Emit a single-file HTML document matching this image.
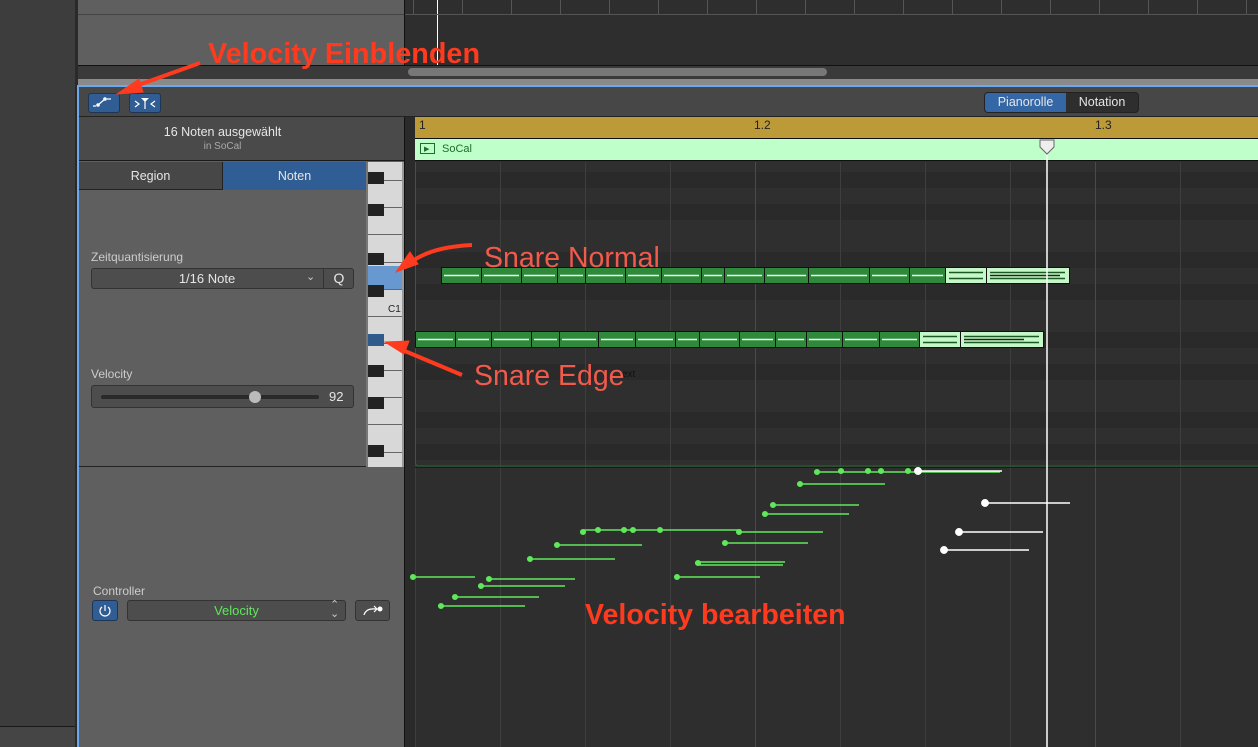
<!DOCTYPE html>
<html><head><meta charset="utf-8"><style>
*{margin:0;padding:0;box-sizing:border-box}
body{width:1258px;height:747px;overflow:hidden;background:#2e2e2e;font-family:"Liberation Sans",sans-serif;position:relative}
.a{position:absolute}
.t{color:#e6e6e6;font-size:12.5px}
</style></head><body>
<div class="a" style="left:0;top:0;width:77px;height:747px;background:#3d3d3d"></div>
<div class="a" style="left:0;top:726px;width:75px;height:1px;background:#1a1a1a"></div>
<div class="a" style="left:0;top:727px;width:75px;height:20px;background:#454545"></div>
<div class="a" style="left:75px;top:0;width:3px;height:747px;background:#2a2a2a"></div>
<div class="a" style="left:78px;top:0;width:326px;height:65px;background:#5f5f5f"></div>
<div class="a" style="left:78px;top:14px;width:326px;height:1px;background:#444"></div>
<div class="a" style="left:404px;top:0;width:1px;height:79px;background:#111"></div>
<div class="a" style="left:78px;top:65px;width:1180px;height:1px;background:#111"></div>
<div class="a" style="left:78px;top:66px;width:1180px;height:13px;background:#3a3a3a"></div>
<div class="a" style="left:408px;top:68px;width:419px;height:8px;border-radius:4px;background:#777"></div>
<div class="a" style="left:78px;top:79px;width:1180px;height:6px;background:#8a8a8a"></div>
<div class="a" style="left:78px;top:85px;width:1180px;height:2px;background:#6aa9f0"></div>
<div class="a" style="left:77px;top:85px;width:2px;height:662px;background:#6aa9f0"></div>
<!-- toolbar -->
<div class="a" style="left:79px;top:87px;width:1179px;height:30px;background:#474747;border-bottom:1px solid #222"></div>
<div class="a" style="left:88px;top:93px;width:32px;height:20px;background:#2f5d94;border-radius:3px;border:1px solid #1e3555"></div>
<svg class="a" style="left:88px;top:93px" width="32" height="20"><path d="M5 13h3M10 12l7-6M19 6h4" stroke="#fff" stroke-width="1.2"/><circle cx="10" cy="12" r="1.8" fill="#fff"/><circle cx="17" cy="6" r="1.8" fill="#fff"/></svg>
<div class="a" style="left:129px;top:93px;width:32px;height:20px;background:#2f5d94;border-radius:3px;border:1px solid #1e3555"></div>
<svg class="a" style="left:129px;top:93px" width="32" height="20"><path d="M6 8l4 3-4 3M26 8l-4 3 4 3M16 7v9" stroke="#fff" stroke-width="1.2" fill="none"/><path d="M12 5h8l-4 4z" fill="#fff"/></svg>
<div class="a" style="left:984px;top:92px;width:155px;height:21px;background:#2e2e2e;border:1px solid #222;border-radius:4px"></div>
<div class="a t" style="left:985px;top:93px;width:81px;height:19px;background:#3567a6;border-radius:3px 0 0 3px;text-align:center;line-height:19px">Pianorolle</div>
<div class="a t" style="left:1066px;top:93px;width:72px;height:19px;text-align:center;line-height:19px">Notation</div>
<!-- left panel -->
<div class="a" style="left:79px;top:117px;width:325px;height:630px;background:#5f5f5f"></div>
<div class="a" style="left:79px;top:117px;width:325px;height:44px;background:#4a4a4a;border-bottom:1px solid #1a1a1a"></div>
<div class="a t" style="left:79px;top:125px;width:287px;text-align:center">16 Noten ausgewählt</div>
<div class="a" style="left:79px;top:141px;width:287px;text-align:center;font-size:10px;color:#aaa">in SoCal</div>
<div class="a t" style="left:79px;top:162px;width:144px;height:28px;background:#474747;text-align:center;line-height:28px;border-right:1px solid #222;border-bottom:1px solid #222">Region</div>
<div class="a t" style="left:223px;top:162px;width:143px;height:28px;background:#2f5d94;text-align:center;line-height:28px">Noten</div>
<div class="a" style="left:91px;top:250px;font-size:12px;color:#ccc">Zeitquantisierung</div>
<div class="a" style="left:91px;top:268px;width:263px;height:21px;background:#4d4d4d;border:1px solid #333;border-radius:3px"></div>
<div class="a t" style="left:91px;top:271px;width:232px;text-align:center;font-size:13px">1/16 Note</div>
<div class="a" style="left:306px;top:270px;color:#ccc;font-size:11px">⌄</div>
<div class="a" style="left:323px;top:269px;width:1px;height:19px;background:#333"></div>
<div class="a t" style="left:324px;top:270px;width:30px;text-align:center;font-size:14px">Q</div>
<div class="a" style="left:91px;top:367px;font-size:12px;color:#ccc">Velocity</div>
<div class="a" style="left:91px;top:385px;width:263px;height:23px;background:#4d4d4d;border:1px solid #333;border-radius:3px"></div>
<div class="a" style="left:101px;top:395px;width:218px;height:4px;background:#2a2a2a;border-radius:2px"></div>
<div class="a" style="left:249px;top:391px;width:12px;height:12px;background:#bbb;border-radius:6px"></div>
<div class="a t" style="left:329px;top:389px;font-size:13px">92</div>
<div class="a" style="left:79px;top:466px;width:325px;height:1px;background:#222"></div>
<div class="a" style="left:93px;top:584px;font-size:12px;color:#ccc">Controller</div>
<div class="a" style="left:92px;top:600px;width:26px;height:21px;background:#2f5d94;border-radius:3px;border:1px solid #1e3555"></div>
<svg class="a" style="left:92px;top:600px" width="26" height="21"><path d="M10 7a5 5 0 1 0 6 0" stroke="#fff" stroke-width="1.2" fill="none"/><path d="M13 5v6" stroke="#fff" stroke-width="1.2"/></svg>
<div class="a" style="left:127px;top:600px;width:219px;height:21px;background:#4d4d4d;border:1px solid #333;border-radius:3px"></div>
<div class="a" style="left:127px;top:603px;width:219px;text-align:center;font-size:13px;color:#5ee85a">Velocity</div>
<div class="a" style="left:330px;top:601px;font-size:11px;color:#ccc;line-height:9px">⌃<br>⌄</div>
<div class="a" style="left:355px;top:600px;width:35px;height:21px;background:#4d4d4d;border:1px solid #333;border-radius:3px"></div>
<svg class="a" style="left:355px;top:600px" width="35" height="21"><path d="M9 15q2-7 12-6" stroke="#fff" stroke-width="1.2" fill="none"/><path d="M19 6l3 3-3 3" stroke="#fff" stroke-width="1.2" fill="none"/><circle cx="25" cy="9" r="2.5" fill="#fff"/></svg>
<!-- keyboard -->
<svg class="a" style="left:366px;top:162px" width="38" height="305">
<rect width="38" height="305" fill="#d8d8d8"/>
<rect x="0" y="0" width="2" height="305" fill="#777"/>
<rect x="2" y="104" width="36" height="23" fill="#6898d0"/>
<g stroke="#666" stroke-width="1"><path d="M2 18.5h36M2 45.5h36M2 72.5h36M2 100.5h36M2 127.5h36M2 154.5h36M2 181.5h36M2 208.5h36M2 235.5h36M2 262.5h36M2 290.5h36"/></g>
<g fill="#222"><rect x="2" y="10" width="16" height="12"/><rect x="2" y="42" width="16" height="12"/><rect x="2" y="91" width="16" height="12"/><rect x="2" y="123" width="16" height="12"/><rect x="2" y="203" width="16" height="12"/><rect x="2" y="235" width="16" height="12"/><rect x="2" y="283" width="16" height="12"/></g>
<rect x="2" y="172" width="16" height="12" fill="#2f5a8a"/>
<text x="22" y="150" font-size="10" font-family="Liberation Sans" fill="#222">C1</text>
<rect x="36" y="0" width="2" height="305" fill="#999"/>
</svg>
<!-- gutter -->
<div class="a" style="left:404px;top:117px;width:11px;height:630px;background:#2a2a2a;border-left:1px solid #111"></div>
<!-- ruler -->
<div class="a" style="left:415px;top:117px;width:843px;height:22px;background:#bd9a38;border-bottom:1px solid #111"></div>
<div class="a" style="left:419px;top:118px;font-size:12px;color:#222">1</div>
<div class="a" style="left:754px;top:118px;font-size:12px;color:#222">1.2</div>
<div class="a" style="left:1095px;top:118px;font-size:12px;color:#222">1.3</div>
<div class="a" style="left:415px;top:139px;width:843px;height:22px;background:#bfffc9;border-bottom:1px solid #111"></div>
<div class="a" style="left:420px;top:143px;width:15px;height:11px;border:1px solid #1d6d2a"></div>
<div class="a" style="left:424px;top:145px;font-size:7px;color:#1d6d2a">▶</div>
<div class="a" style="left:442px;top:143px;font-size:11px;color:#1d6d2a">SoCal</div>
<!-- grid -->
<svg class="a" style="left:415px;top:162px" width="843" height="585">
<g fill="#2a2a2a">
<rect y="0" width="843" height="305" fill="#2f2f2f"/>
<rect y="10" width="843" height="16"/><rect y="42" width="843" height="16"/><rect y="90" width="843" height="16"/><rect y="122" width="843" height="16"/><rect y="170" width="843" height="16"/><rect y="202" width="843" height="16"/><rect y="250" width="843" height="16"/><rect y="282" width="843" height="16"/>
</g>
<rect y="305" width="843" height="280" fill="#2e2e2e"/>
<g stroke="#3e3e3e"><path d="M85.5 0v585M170.5 0v585M255.5 0v585M425.5 0v585M510.5 0v585M595.5 0v585M765.5 0v585M0.5 0v585"/></g>
<g stroke="#4a4a4a"><path d="M340.5 0v585M680.5 0v585"/></g>
<rect x="0.5" y="-2" width="900" height="306" fill="none" stroke="#1f6b2a" rx="3"/>
<line x1="0" y1="305.5" x2="843" y2="305.5" stroke="#1a1a1a"/>
</svg>
<!-- notes -->
<svg class="a" style="left:0;top:0" width="1258" height="747">
<g stroke="#111">
<rect x="441.5" y="267.5" width="504" height="16" fill="#2e8a3a"/>
<rect x="945.5" y="267.5" width="124" height="16" fill="#c6f7c8"/>
<rect x="415.5" y="331.5" width="504" height="16" fill="#2e8a3a"/>
<rect x="919.5" y="331.5" width="124" height="16" fill="#c6f7c8"/>
<path d="M481.5 268v16M521.5 268v16M557.5 268v16M585.5 268v16M625.5 268v16M661.5 268v16M701.5 268v16M724.5 268v16M764.5 268v16M808.5 268v16M869.5 268v16M909.5 268v16M986.5 268v16"/>
<path d="M455.5 332v16M491.5 332v16M531.5 332v16M559.5 332v16M598.5 332v16M635.5 332v16M675.5 332v16M699.5 332v16M739.5 332v16M775.5 332v16M806.5 332v16M842.5 332v16M879.5 332v16M960.5 332v16"/>
</g>
<g stroke="#e8ffe8" stroke-width="1.5">
<path d="M444 275.5h35M484 275.5h35M524 275.5h31M560 275.5h23M588 275.5h35M628 275.5h31M664 275.5h35M704 275.5h18M727 275.5h35M767 275.5h39M811 275.5h56M872 275.5h35M912 275.5h31"/>
<path d="M418 339.5h35M458 339.5h31M494 339.5h35M534 339.5h23M562 339.5h34M601 339.5h32M638 339.5h35M678 339.5h19M702 339.5h35M742 339.5h31M778 339.5h26M809 339.5h31M845 339.5h32M882 339.5h35"/>
</g>
<g stroke="#1a5a22" stroke-width="1.5"><path d="M949 272.5h34M949 278.5h34M990 272.5h75M990 278.5h75M923 336.5h34M923 342.5h34M964 336.5h75M964 342.5h75"/></g>
<g stroke="#222" stroke-width="1.5"><path d="M990 275.5h70M964 339.5h60"/></g>
<text x="622" y="377" font-size="10" fill="#111" font-family="Liberation Sans">ext</text>
<!-- playhead -->
<line x1="1047" y1="148" x2="1047" y2="747" stroke="#fff" stroke-width="1.5"/>
<path d="M1040 140h14v7l-7 7l-7-7z" fill="#eee" stroke="#666"/>
<line x1="437.5" y1="0" x2="437.5" y2="65" stroke="#fff"/>
<g stroke="#555"><path d="M413.5 0v14M462.5 0v14M511.5 0v14M560.5 0v14M609.5 0v14M658.5 0v14M707.5 0v14M756.5 0v14M805.5 0v14M854.5 0v14M903.5 0v14M952.5 0v14M1001.5 0v14M1050.5 0v14M1099.5 0v14M1148.5 0v14M1197.5 0v14M1246.5 0v14"/><path d="M405 14.5h853"/></g>
<!-- velocity -->
<g stroke="#5ee85a" stroke-width="1.5" fill="#5ee85a">
<path d="M817 472h183M800 484h85M773 505h86M765 514h84M583 530h158M739 532h84M725 543h83M557 545h85M530 559h85M698 562h87M698 565h85M413 577h62M489 579h86M677 577h83M481 586h84M455 597h84M441 606h84"/>
<circle cx="817" cy="472" r="2.3"/><circle cx="841" cy="471" r="2.3"/><circle cx="868" cy="471" r="2.3"/><circle cx="881" cy="471" r="2.3"/><circle cx="908" cy="471" r="2.3"/>
<circle cx="800" cy="484" r="2.3"/><circle cx="773" cy="505" r="2.3"/><circle cx="765" cy="514" r="2.3"/>
<circle cx="583" cy="532" r="2.3"/><circle cx="598" cy="530" r="2.3"/><circle cx="624" cy="530" r="2.3"/><circle cx="633" cy="530" r="2.3"/><circle cx="660" cy="530" r="2.3"/><circle cx="739" cy="532" r="2.3"/>
<circle cx="725" cy="543" r="2.3"/><circle cx="557" cy="545" r="2.3"/><circle cx="530" cy="559" r="2.3"/><circle cx="698" cy="563" r="2.3"/>
<circle cx="413" cy="577" r="2.3"/><circle cx="489" cy="579" r="2.3"/><circle cx="677" cy="577" r="2.3"/><circle cx="481" cy="586" r="2.3"/><circle cx="455" cy="597" r="2.3"/><circle cx="441" cy="606" r="2.3"/>
</g>
<g stroke="#fff" stroke-width="1.5" fill="#fff">
<path d="M918 471h84M985 503h85M959 532h84M944 550h85"/>
<circle cx="918" cy="471" r="3.2"/><circle cx="985" cy="503" r="3.2"/><circle cx="959" cy="532" r="3.2"/><circle cx="944" cy="550" r="3.2"/>
</g>
<!-- annotations -->
<g fill="#ff3b1f" stroke="#ff3b1f">
<path d="M200 63L130 88" stroke-width="4"/><path d="M117 94l22-15 4 13z"/>
<path d="M472 245Q430 247 410 263" stroke-width="4" fill="none"/><path d="M396 272l14-20 8 12z"/>
<path d="M462 375L400 349" stroke-width="4"/><path d="M385 342l24-1-5 13z"/>
</g>
<text x="208" y="63" font-size="28.8" font-weight="bold" fill="#ff3b1f" font-family="Liberation Sans">Velocity Einblenden</text>
<text x="484" y="267" font-size="28.5" fill="#f25a4c" font-family="Liberation Sans">Snare Normal</text>
<text x="474" y="385" font-size="28.5" fill="#f25a4c" font-family="Liberation Sans">Snare Edge</text>
<text x="585" y="624" font-size="28.6" font-weight="bold" fill="#ff3b1f" font-family="Liberation Sans">Velocity bearbeiten</text>
</svg>
</body></html>
